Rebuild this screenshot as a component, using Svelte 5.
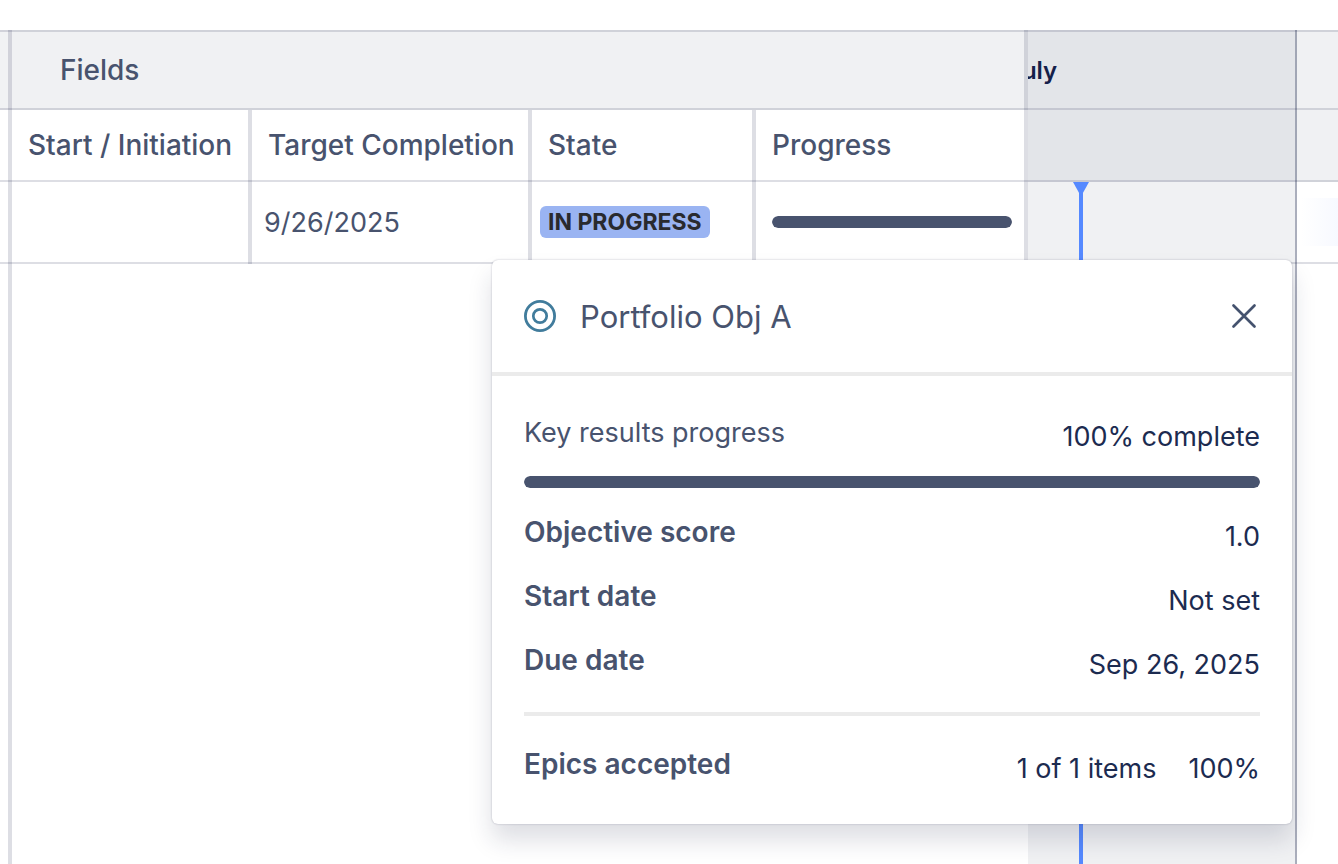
<script lang="ts">
  const columns = ['Start / Initiation', 'Target Completion', 'State', 'Progress'];
  const item = { target: '9/26/2025', state: 'In progress', progress: 100 };
  const details = [
    { label: 'Objective score', value: '1.0' },
    { label: 'Start date', value: 'Not set' },
    { label: 'Due date', value: 'Sep 26, 2025' },
  ];
  let open = $state(true);
</script>

<main class="board">
  <div class="gutter">
    <div class="cell band"></div>
    <div class="cell sub"></div>
    <div class="cell body"></div>
  </div>

  <section class="fields">
    <table>
      <colgroup>
        <col class="c-start" /><col class="c-target" /><col class="c-state" /><col class="c-progress" />
      </colgroup>
      <thead>
        <tr class="band"><th colspan="4" class="group">Fields</th></tr>
        <tr class="sub">
          {#each columns as name}<th>{name}</th>{/each}
        </tr>
      </thead>
      <tbody>
        <tr class="body">
          <td></td>
          <td class="date">{item.target}</td>
          <td class="state"><span class="badge">{item.state}</span></td>
          <td class="meter"><div class="bar"><div class="fill" style="width: {item.progress}%"></div></div></td>
        </tr>
      </tbody>
    </table>
  </section>

  <section class="timeline">
    <div class="month">
      <div class="cell band"><span class="name">July</span></div>
      <div class="cell sub"></div>
      <div class="cell body"></div>
      <svg class="today" width="16" height="14" viewBox="0 0 16 14" aria-hidden="true"><path d="M0 0H16L8.800 13H7.200Z" fill="#5589ff" /></svg>
      <div class="today-line"></div>
    </div>
    <div class="next">
      <div class="cell band"></div>
      <div class="cell sub"></div>
      <div class="cell body"><div class="span"></div></div>
    </div>
  </section>

  {#if open}
    <div class="popup" role="dialog" aria-labelledby="popup-title">
      <header>
        <svg width="32" height="32" viewBox="0 0 32 32" fill="none" stroke="#417c9c" aria-hidden="true">
          <circle cx="16" cy="16" r="14.600" stroke-width="2.800" />
          <circle cx="16" cy="16" r="6.700" stroke-width="2.700" />
        </svg>
        <h2 id="popup-title">Portfolio Obj A</h2>
        <button type="button" aria-label="Close" onclick={() => (open = false)}>
          <svg width="32" height="32" viewBox="0 0 32 32" fill="none" stroke="#44526e" stroke-width="2.700" stroke-linecap="round" aria-hidden="true">
            <path d="M5.500 5.500L26.500 26.500M26.500 5.500L5.500 26.500" />
          </svg>
        </button>
      </header>
      <div class="content">
        <div class="row">
          <span class="label light">Key results progress</span>
          <span class="value">100% complete</span>
        </div>
        <div class="bar wide"><div class="fill" style="width: 100%"></div></div>
        {#each details as d}
          <div class="row"><span class="label">{d.label}</span><span class="value">{d.value}</span></div>
        {/each}
        <hr />
        <div class="row">
          <span class="label">Epics accepted</span>
          <span class="value pair"><span>1 of 1 items</span><span>100%</span></span>
        </div>
      </div>
    </div>
  {/if}
</main>

<style>
  :global(body) {
    margin: 0;
    background: #fff;
  }
  .board {
    --line: rgba(11, 20, 62, 0.14);
    --grey: #f0f1f3;
    position: relative;
    box-sizing: border-box;
    display: flex;
    min-height: 100vh;
    padding-top: 30px;
    overflow: hidden;
    font-family: Inter, 'Liberation Sans', sans-serif;
    font-size: 27px;
    color: #48536e;
  }
  .gutter {
    flex: none;
    width: 12px;
    box-shadow: inset -4px 0 0 var(--line);
  }
  .cell {
    box-sizing: border-box;
    box-shadow: inset 0 -2px 0 var(--line);
  }
  .cell.band {
    height: 80px;
    box-shadow: inset 0 -2px 0 var(--line), inset 0 2px 0 var(--line);
  }
  .cell.sub {
    height: 72px;
  }
  .cell.body {
    height: 82px;
  }
  .gutter .band {
    background: rgba(9, 30, 66, 0.06);
  }

  .fields {
    flex: none;
  }
  table {
    width: 1016px;
    table-layout: fixed;
    border-collapse: collapse;
  }
  .c-start { width: 240px; }
  .c-target { width: 280px; }
  .c-state { width: 224px; }
  .c-progress { width: 272px; }
  th,
  td {
    padding: 0 12px 2px 16px;
    text-align: left;
    white-space: nowrap;
    box-shadow: inset -4px 0 0 var(--line), inset 0 -2px 0 var(--line);
  }
  th {
    font-size: 28px;
    font-weight: 500;
  }
  tr.band { height: 80px; }
  tr.sub { height: 72px; }
  tr.body { height: 82px; }
  th.group {
    padding-bottom: 0;
    padding-left: 48px;
    background: var(--grey);
    box-shadow: inset -4px 0 0 var(--line), inset 0 -2px 0 var(--line), inset 0 2px 0 var(--line);
  }
  td.date {
    padding-left: 12px;
  }
  td.state {
    padding-left: 8px;
  }
  .badge {
    display: block;
    width: max-content;
    padding: 0 8px;
    border-radius: 6px;
    background: #9ab4f2;
    color: #292a2e;
    font-size: 23px;
    font-weight: 700;
    line-height: 32px;
    text-transform: uppercase;
  }
  td.meter {
    padding-right: 16px;
  }
  .bar {
    height: 12px;
    border-radius: 6px;
    background: #dddee1;
    overflow: hidden;
  }
  .fill {
    height: 100%;
    border-radius: 6px;
    background: #48536e;
  }

  .timeline {
    flex: 1;
    display: flex;
    min-width: 0;
  }
  .month {
    position: relative;
    flex: none;
    width: 269px;
    background: var(--grey);
    box-shadow: inset -2px 0 0 rgba(11, 20, 62, 0.3);
  }
  .month .band,
  .month .sub {
    background: rgba(9, 20, 50, 0.05);
  }
  .month .band {
    display: flex;
    align-items: center;
    overflow: hidden;
  }
  .name {
    margin-left: -20px;
    color: #14204a;
    font-size: 24px;
    font-weight: 600;
  }
  .today {
    position: absolute;
    top: 152px;
    left: 45px;
  }
  .today-line {
    position: absolute;
    top: 152px;
    bottom: 0;
    left: 51px;
    width: 4px;
    background: #5589ff;
  }
  .next {
    flex: 1;
    min-width: 0;
  }
  .next .band,
  .next .sub {
    background: var(--grey);
  }
  .next .body {
    padding: 16px 0 18px 4px;
  }
  .span {
    height: 48px;
    background: linear-gradient(90deg, #fff, #f7f9ff);
  }

  .popup {
    position: absolute;
    top: 260px;
    left: 492px;
    width: 800px;
    border-radius: 6px;
    background: #fff;
    box-shadow: 0 16px 24px rgba(30, 31, 66, 0.15), 0 0 2px rgba(30, 31, 66, 0.31);
  }
  header {
    display: flex;
    align-items: center;
    gap: 24px;
    height: 112px;
    padding: 0 32px;
    border-bottom: 4px solid #ebebeb;
  }
  h2 {
    flex: 1;
    margin: 0;
    font-size: 31px;
    font-weight: 400;
  }
  button {
    display: flex;
    padding: 0;
    border: 0;
    background: none;
    cursor: pointer;
  }
  header svg {
    display: block;
  }
  .content {
    padding: 24px 32px 28px;
  }
  .row {
    display: flex;
    justify-content: space-between;
    align-items: center;
    height: 64px;
  }
  .label {
    font-size: 28px;
    font-weight: 600;
  }
  .label.light {
    font-size: 27px;
    font-weight: 400;
  }
  .value {
    padding-top: 8px;
    color: #1c2b50;
  }
  .pair {
    display: flex;
    gap: 32px;
  }
  .bar.wide {
    margin: 12px 0;
  }
  hr {
    height: 4px;
    margin: 20px 0 16px;
    border: 0;
    background: #ebebeb;
  }
</style>
